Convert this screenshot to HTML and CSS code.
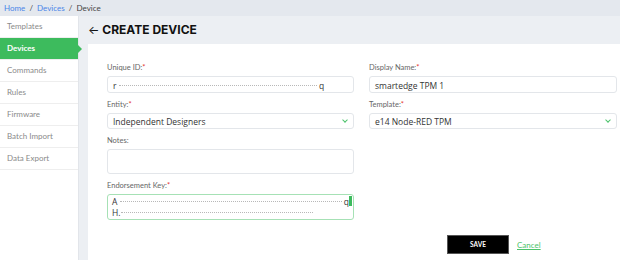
FILE: index.html
```html
<!DOCTYPE html>
<html>
<head>
    <title>Create Device</title>
    <link rel="stylesheet" href="styles.css">
</head>
<body>
<div class="crumbs">
    <a href="#">Home</a> <span class="sep">/</span> <a href="#">Devices</a> <span class="sep">/</span> <span>Device</span>
</div>

<div class="wrap">
    <ul class="side">
        <li>Templates</li>
        <li class="active">Devices</li>
        <li>Commands</li>
        <li>Rules</li>
        <li>Firmware</li>
        <li>Batch Import</li>
        <li>Data Export</li>
    </ul>

    <div class="main">
        <h1><span class="back">&larr;</span> CREATE DEVICE</h1>

        <div class="card">
            <div class="grid">
                <div class="field">
                    <label>Unique ID:<span class="req">*</span></label>
                    <div class="input">r <span class="mask" style="width:198px"></span> q</div>
                </div>
                <div class="field">
                    <label>Display Name:<span class="req">*</span></label>
                    <div class="input">smartedge TPM 1</div>
                </div>
                <div class="field">
                    <label>Entity:<span class="req">*</span></label>
                    <div class="input select">Independent Designers <span class="chev"></span></div>
                </div>
                <div class="field">
                    <label>Template:<span class="req">*</span></label>
                    <div class="input select">e14 Node-RED TPM <span class="chev"></span></div>
                </div>
                <div class="field">
                    <label>Notes:</label>
                    <div class="input area"></div>
                </div>
                <div></div>
                <div class="field">
                    <label>Endorsement Key:<span class="req">*</span></label>
                    <div class="input area key">
                        <div>A <span class="mask" style="width:222px"></span> q</div>
                        <div>H.<span class="mask" style="width:192px"></span></div>
                        <span class="bar"></span>
                    </div>
                </div>
            </div>

            <div class="actions">
                <button>SAVE</button>
                <a href="#" class="cancel">Cancel</a>
            </div>
        </div>
    </div>
</div>
</body>
</html>
```

FILE: styles.css
```css
body {
    margin: 0;
    width: 620px;
    height: 260px;
    overflow: hidden;
    font-family: Lato, "Open Sans", sans-serif;
    background-color: #eceff3;
}

.crumbs {
    height: 16px;
    line-height: 16px;
    padding-left: 4px;
    font-size: 8px;
    color: #444;
    background-color: #e4e8ee;
}

.crumbs a {
    color: #4a86e8;
    text-decoration: none;
}

.crumbs .sep {
    margin: 0 2px;
}

.wrap {
    display: flex;
    height: 244px;
}

.side {
    width: 78px;
    margin: 0;
    padding: 0;
    list-style: none;
    background-color: #fff;
    border-right: 1px solid #e2e5ea;
}

.side li {
    position: relative;
    height: 21px;
    line-height: 21px;
    padding-left: 7px;
    font-size: 8px;
    color: #8a8a8a;
    border-bottom: 1px solid #eeeeee;
}

.side li.active {
    background-color: #3dbb5d;
    color: #fff;
    font-weight: bold;
}

.side li.active::after {
    content: "";
    position: absolute;
    right: -4px;
    top: 7px;
    border-left: 4px solid #3dbb5d;
    border-top: 4px solid transparent;
    border-bottom: 4px solid transparent;
}

.main {
    flex: 1;
    padding-left: 9px;
}

h1 {
    margin: 0;
    height: 28px;
    line-height: 28px;
    font-family: Inter, sans-serif;
    font-size: 12px;
    font-weight: 700;
    color: #111;
}

.back {
    font-weight: 400;
}

.card {
    height: 216px;
    padding: 19px 0 0 19px;
    background-color: #fff;
    box-sizing: border-box;
}

.grid {
    display: grid;
    grid-template-columns: 247px 248px;
    column-gap: 15px;
}

.field {
    margin-bottom: 7px;
}

.field label {
    display: block;
    height: 10px;
    line-height: 10px;
    margin-bottom: 3px;
    font-size: 7.5px;
    color: #666;
}

.req {
    color: #e53935;
}

.input {
    position: relative;
    height: 17px;
    line-height: 17px;
    padding: 0 5px;
    font-family: "Open Sans", sans-serif;
    font-size: 8.5px;
    color: #333;
    border: 1px solid #e3e6ea;
    border-radius: 3px;
    box-sizing: border-box;
    white-space: nowrap;
}

.select {
    height: 16px;
    line-height: 15px;
}

.chev {
    position: absolute;
    right: 6px;
    top: 4px;
    width: 3px;
    height: 3px;
    border-right: 1px solid #4cc36b;
    border-bottom: 1px solid #4cc36b;
    transform: rotate(45deg);
}

.area {
    height: 25px;
}

.key {
    height: 26px;
    padding: 1px 4px;
    line-height: 11px;
    border-color: #a6e1b5;
}

.mask {
    display: inline-block;
    height: 2px;
    vertical-align: middle;
    border-top: 1px dotted #b8b8b8;
}

.bar {
    position: absolute;
    right: 1px;
    top: 1px;
    width: 3px;
    height: 10px;
    background-color: #3dbb5d;
}

.actions {
    display: flex;
    align-items: center;
    margin-top: 8px;
    padding-left: 340px;
}

.actions button {
    width: 62px;
    height: 19px;
    background-color: #000;
    color: #fff;
    font-family: Lato, sans-serif;
    font-size: 6.5px;
    font-weight: bold;
    border: 1px solid #555;
    cursor: pointer;
}

.cancel {
    margin-left: 8px;
    font-size: 8px;
    color: #4cc36b;
}
```
